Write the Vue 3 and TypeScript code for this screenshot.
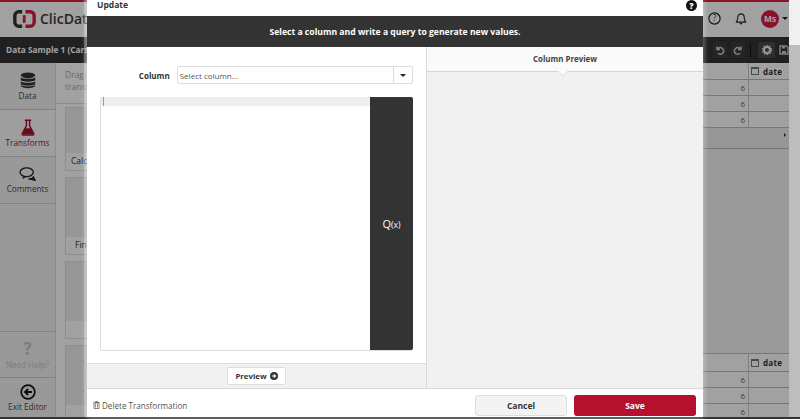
<script setup lang="ts">
const navTop = [
  { label: 'Data', icon: 'db', h: 47 },
  { label: 'Transforms', icon: 'flask', active: true, h: 47 },
  { label: 'Comments', icon: 'chat', h: 47 },
]
const cards = [
  { label: 'Calc', h: 64, pad: 5 },
  { label: 'Find', h: 78, pad: 9 },
  { label: '', h: 78, pad: 5 },
  { label: '', h: 78, pad: 5 },
]
</script>

<template>
  <div class="page">
    <div class="shell">
      <div class="app">
        <header class="top">
          <div class="brand">
            <svg class="logo" width="23" height="18" viewBox="0 0 24 19">
              <path d="M9.500 1.800H6A4.200 4.200 0 0 0 1.800 6v7A4.200 4.200 0 0 0 6 17.200h3.500" fill="none" stroke="#333" stroke-width="3.600" />
              <path d="M13 1.800h5A4.200 4.200 0 0 1 22.200 6v7a4.200 4.200 0 0 1-4.200 4.200h-5" fill="none" stroke="#d81f42" stroke-width="3.600" />
              <rect x="10.200" y="5.500" width="3" height="8" fill="#d81f42" />
            </svg>
            <span class="brand-name">ClicData</span>
          </div>
          <div class="top-right">
            <svg width="13" height="13" viewBox="0 0 18 18"><circle cx="9" cy="9" r="7.800" fill="none" stroke="#222" stroke-width="1.600" /><text x="9" y="13" text-anchor="middle" font-size="11.500" font-family="Open Sans" fill="#222">?</text></svg>
            <svg class="bell" width="12" height="14" viewBox="0 0 16 18"><path d="M8 2.200a4.200 4.200 0 0 0-4.200 4.200c0 4.400-1.800 5.800-2 6.800h12.400c-.2-1-2-2.400-2-6.800A4.200 4.200 0 0 0 8 2.200z M6.500 14.500a1.600 1.600 0 0 0 3 0" fill="none" stroke="#222" stroke-width="1.500" /></svg>
            <span class="avatar">Ms</span>
            <span class="avatar-caret"></span>
          </div>
        </header>
        <div class="crumb">
          <span class="crumb-title">Data Sample 1 (Cars)</span>
          <div class="tools">
            <span class="tool">
              <svg width="10" height="10" viewBox="0 0 10 10"><path d="M2 1.500v3h3M2.300 4.500A3.300 3.300 0 1 1 3 8.300" fill="none" stroke="#ccc" stroke-width="1.500" /></svg>
            </span>
            <span class="tool">
              <svg width="10" height="10" viewBox="0 0 10 10"><path d="M8 1.500v3H5M7.700 4.500A3.300 3.300 0 1 0 7 8.300" fill="none" stroke="#ccc" stroke-width="1.500" /></svg>
            </span>
            <span class="tool-sep"></span>
            <span class="tool tool-box">
              <svg width="10" height="10" viewBox="0 0 10 10"><circle cx="5" cy="5" r="3" fill="none" stroke="#eee" stroke-width="2" /><circle cx="5" cy="5" r="4.600" fill="none" stroke="#eee" stroke-width="1.200" stroke-dasharray="1.500 1.400" /></svg>
            </span>
            <span class="tool tool-save">
              <svg width="10" height="10" viewBox="0 0 10 10"><path d="M1 1h6.500L9 2.500V9H1z" fill="none" stroke="#ccc" stroke-width="1.400" /><rect x="3" y="1.500" width="3" height="2" fill="#ccc" /><rect x="3" y="6" width="4" height="2.500" fill="#ccc" /></svg>
            </span>
          </div>
        </div>
        <div class="work">
          <aside class="side">
            <div v-for="n in navTop" :key="n.label" class="nav" :class="{ active: n.active }" :style="{ height: n.h + 'px' }">
              <svg v-if="n.icon === 'db'" width="16" height="17" viewBox="0 0 20 21" fill="#333">
                <ellipse cx="10" cy="4" rx="9" ry="3.600" />
                <path d="M1 6.500c1.500 2.500 16.500 2.500 18 0v3.500c-1.500 2.800-16.500 2.800-18 0z" />
                <path d="M1 11.500c1.500 2.500 16.500 2.500 18 0V15c-1.500 2.800-16.500 2.800-18 0z" />
                <path d="M1 16.200c1.500 2.200 16.500 2.200 18 0v1c-1.500 3.800-16.500 3.800-18 0z" />
              </svg>
              <svg v-else-if="n.icon === 'flask'" width="16" height="17" viewBox="0 0 20 21">
                <path d="M6 1.500h8M8 2v6.500L2.800 18a1.200 1.200 0 0 0 1 1.800h12.400a1.200 1.200 0 0 0 1-1.800L12 8.500V2" fill="none" stroke="#a3142c" stroke-width="1.800" />
                <path d="M6.500 11.500h7l3.700 7.500H2.800z" fill="#a3142c" />
              </svg>
              <svg v-else width="18" height="15" viewBox="0 0 20 17">
                <ellipse cx="8.500" cy="6" rx="7.500" ry="5" fill="none" stroke="#222" stroke-width="1.500" />
                <path d="M4.500 10.500 3.500 13.500 7.500 11.500z" fill="#222" />
                <path d="M9.500 13c3 .4 5.500-.6 6.500-3 1.500 1.800 2.300 4.600 3.500 6-2.200-.1-3.900-.7-5-1.300-1.900.4-3.500-.2-5-1.700z" fill="#222" />
              </svg>
              <span>{{ n.label }}</span>
            </div>
            <div class="side-gap"></div>
            <div class="nav help">
              <span class="help-q">?</span>
              <span>Need Help?</span>
            </div>
            <div class="nav exit">
              <svg width="16" height="16" viewBox="0 0 16 16">
                <circle cx="8" cy="8" r="6.800" fill="none" stroke="#111" stroke-width="1.700" />
                <path d="M12 8H6M8.200 4.800 5 8l3.200 3.200" fill="none" stroke="#111" stroke-width="1.900" />
              </svg>
              <span>Exit Editor</span>
            </div>
          </aside>
          <section class="palette">
            <p class="hint">Drag a<br />transf</p>
            <div class="card-list">
              <div v-for="(c, i) in cards" :key="i" class="card" :style="{ height: c.h + 'px' }">
                <div class="card-img"></div>
                <div class="card-label" :style="{ paddingLeft: c.pad + 'px' }">{{ c.label }}</div>
              </div>
            </div>
          </section>
          <section class="grid-area">
            <div class="table">
              <div class="tr th"><span class="num"></span><span class="date-col"><i class="cal"></i><b>date</b></span></div>
              <div v-for="i in 3" :key="i" class="tr"><span class="num">6</span><span class="date-col"></span></div>
            </div>
            <div class="scrollbar"><span class="scroll-arrow"></span></div>
            <div class="grid-spacer"></div>
            <div class="table table-low">
              <div class="tr th-low"><span class="num"></span><span class="date-col"><i class="cal"></i><b>date</b></span></div>
              <div v-for="i in 3" :key="i" class="tr"><span class="num">6</span><span class="date-col"></span></div>
            </div>
          </section>
        </div>
      </div>
      <div class="vscroll"></div>
    </div>
    <div class="bottom-line"></div>

    <div class="backdrop"></div>

    <div class="modal">
      <div class="m-head">
        <span class="m-title">Update</span>
        <span class="m-help">?</span>
      </div>
      <div class="m-band">Select a column and write a query to generate new values.</div>
      <div class="m-body">
        <div class="m-left">
          <div class="m-form">
            <div class="col-row">
              <label class="col-label">Column</label>
              <div class="select">
                <span class="select-text">Select column...</span>
                <span class="select-btn"><i></i></span>
              </div>
            </div>
            <div class="editor">
              <div class="code">
                <div class="code-line"><i class="cursor"></i></div>
              </div>
              <div class="qx">Q<small>(x)</small></div>
            </div>
          </div>
          <div class="preview-bar">
            <button class="preview-btn">Preview
              <svg width="8" height="8" viewBox="0 0 10 10"><circle cx="5" cy="5" r="5" fill="#333" /><path d="M2.300 5h4.200M4.800 2.900 6.900 5 4.800 7.100" fill="none" stroke="#fff" stroke-width="1.400" /></svg>
            </button>
          </div>
        </div>
        <div class="m-right">
          <div class="cp-head">Column Preview</div>
          <div class="cp-body"></div>
        </div>
      </div>
      <div class="m-foot">
        <span class="delete">
          <svg width="7" height="8" viewBox="0 0 7 8"><path d="M.500 1.500h6M2.500 1.500V.500h2v1M1 2h5v5.500H1z" fill="none" stroke="#666" stroke-width=".8" /><path d="M2.500 3v3.500M4.500 3v3.500" stroke="#666" stroke-width=".7" /></svg>
          Delete Transformation
        </span>
        <div class="foot-btns">
          <button class="btn cancel">Cancel</button>
          <button class="btn save">Save</button>
        </div>
      </div>
    </div>
  </div>
</template>

<style>
html, body { margin: 0; padding: 0; overflow: hidden; }
</style>

<style scoped>
* { box-sizing: border-box; }
.page {
  position: relative;
  width: 800px;
  height: 419px;
  overflow: hidden;
  display: flex;
  flex-direction: column;
  font-family: "Open Sans", sans-serif;
  color: #333;
}
.shell { flex: 1; display: flex; min-height: 0; }
.app { width: 789px; flex: none; display: flex; flex-direction: column; background: #fff; }
.vscroll { flex: 1; background: linear-gradient(#f0f0f0 0 45px, #bdbdbd 45px); }
.top {
  height: 37px;
  flex: none;
  border-top: 2px solid #d81f42;
  background: #fff;
  display: flex;
  justify-content: space-between;
  align-items: center;
  padding: 0 1px 2px 13px;
}
.brand { display: flex; align-items: center; gap: 4px; width: 74px; overflow: hidden; }
.brand-name { font-size: 14px; line-height: 20px; font-weight: 600; color: #3a3a3a; white-space: nowrap; }
.logo { flex: none; }
.top-right { display: flex; align-items: center; }
.bell { margin-left: 14px; }
.avatar {
  margin-left: 14px;
  width: 18px; height: 18px; border-radius: 50%;
  background: #d81f42; color: #fff;
  font-size: 8.500px; font-weight: 700;
  display: flex; align-items: center; justify-content: center;
}
.avatar-caret { margin-left: 3px; border: 3px solid transparent; border-top-color: #222; border-bottom: 0; }
.crumb {
  height: 26px; flex: none;
  background: #333;
  display: flex; justify-content: space-between; align-items: center;
  padding: 0 0 0 6px;
  color: #fff;
}
.crumb-title { font-size: 8.300px; line-height: 12px; font-weight: 700; color: #fff; width: 81px; overflow: hidden; white-space: nowrap; }
.tools { display: flex; align-items: center; gap: 4px; }
.tool { width: 14px; height: 16px; display: flex; align-items: center; justify-content: center; background: #3c3c3c; }
.tool-sep { width: 1px; height: 13px; background: #111; margin: 0 3px 0 1px; }
.tool-box { width: 17px; background: #484848; }
.tool-save { width: 10px; background: none; }
.work { flex: 1; display: flex; min-height: 0; }
.side { width: 56px; flex: none; display: flex; flex-direction: column; background: #f3f3f3; border-right: 1px solid #ddd; }
.nav {
  display: flex; flex-direction: column; align-items: center; justify-content: center;
  gap: 1px; font-size: 8.200px; line-height: 11px; color: #444;
  height: 47px; border-bottom: 1px solid #ccc; flex: none;
}
.nav.active { color: #a3142c; background: #fafafa; }
.side-gap { flex: 1; }
.help { border-top: 1px solid #ccc; color: #c4c4c4; height: 47px; }
.help-q { font-size: 17px; line-height: 18px; font-weight: 700; color: #c4c4c4; }
.exit { border: 0; height: 39px; color: #444; }
.palette { flex: 1 1 0; background: #fff; min-width: 0; overflow: hidden; }
.hint { margin: 0; height: 41px; padding: 6px 9px 0; font-size: 8.500px; line-height: 12px; color: #aaa; white-space: nowrap; border-bottom: 1px solid #ddd; }
.card-list { display: flex; flex-direction: column; gap: 6px; padding: 3px 9px 0; }
.card { border: 1px solid #e0e0e0; display: flex; flex-direction: column; flex: none; }
.card-img { flex: 1; background: #eee; }
.card-label { height: 17px; font-size: 8.500px; line-height: 16px; white-space: nowrap; }
.grid-area { width: 129px; flex: none; background: #fff; display: flex; flex-direction: column; }
.table { display: flex; flex-direction: column; flex: none; }
.tr { height: 16px; display: flex; border-bottom: 1px solid #bbb; font-size: 8px; flex: none; }
.th { height: 17px; }
.num { width: 89px; flex: none; text-align: right; padding-right: 3px; line-height: 16px; border-right: 1px solid #ccc; color: #666; }
.date-col { flex: 1; display: flex; align-items: center; gap: 4px; padding-left: 2px; }
.date-col b { font-size: 8px; letter-spacing: .3px; }
.cal { width: 8px; height: 8px; border: 1px solid #777; border-top-width: 2px; display: block; }
.scrollbar { height: 21px; display: flex; justify-content: flex-end; align-items: center; padding: 0 3px 6px 0; background: #eee; border-bottom: 1px solid #bbb; flex: none; }
.scroll-arrow { border: 2.500px solid transparent; border-left-color: #333; border-right: 0; }
.grid-spacer { flex: 1; background: #f4f4f4; border-bottom: 1px solid #bbb; }
.table-low { height: 63px; overflow: hidden; }
.th-low { height: 18px; }
.bottom-line { height: 2px; flex: none; background: #333; }

.backdrop { position: absolute; inset: 0 11px 2px 0; background: rgba(0, 0, 0, .37); }

.modal {
  position: absolute;
  left: 87px; top: 0;
  width: 616px; height: 417px;
  display: flex; flex-direction: column;
  background: #fff;
  box-shadow: 0 0 6px rgba(255, 255, 255, .55), -3px 0 0 rgba(255, 255, 255, .25);
}
.m-head { height: 16px; flex: none; display: flex; justify-content: space-between; align-items: flex-start; padding: 0 6px 0 10px; }
.m-title { font-size: 8.500px; line-height: 9px; font-weight: 700; color: #333; }
.m-help {
  width: 11px; height: 11px; border-radius: 50%;
  background: #111; color: #fff; font-size: 8.500px; font-weight: 800; line-height: 11px; text-align: center;
}
.m-band {
  height: 31px; flex: none;
  background: #333; color: #fff;
  font-size: 8.650px; font-weight: 700;
  display: flex; align-items: center; justify-content: center;
}
.m-body { flex: 1; display: flex; min-height: 0; }
.m-left { width: 340px; flex: none; display: flex; flex-direction: column; border-right: 1px solid #d8d8d8; }
.m-form { flex: 1; display: flex; flex-direction: column; padding: 19px 13px 12px; min-height: 0; }
.col-row { display: flex; align-items: center; height: 18px; margin-left: -13px; flex: none; }
.col-label { width: 83px; text-align: right; font-size: 8px; font-weight: 700; color: #333; }
.select {
  margin-left: 7px; width: 237px; height: 18px;
  border: 1px solid #ddd; border-radius: 2px;
  display: flex; align-items: center; justify-content: space-between;
}
.select-text { font-size: 8px; color: #555; padding-left: 2px; }
.select-btn { width: 19px; height: 16px; border-left: 1px solid #ddd; display: flex; align-items: center; justify-content: center; }
.select-btn i { border: 3px solid transparent; border-top: 3px solid #222; border-bottom: 0; }
.editor { flex: 1; display: flex; margin-top: 13px; border: 1px solid #ddd; border-top: 0; border-radius: 2px; min-height: 0; }
.code { flex: 1; background: #fff; }
.code-line { height: 9px; background: #eee; padding-left: 2px; }
.cursor { display: block; width: 1px; height: 9px; background: #999; }
.qx {
  width: 43px; flex: none; background: #333; color: #fff; margin: 0 -1px 0 0;
  display: flex; align-items: center; justify-content: center;
  font-size: 11px; border-radius: 0 2px 2px 0;
}
.qx small { font-size: 8.500px; position: relative; top: 1px; }
.preview-bar { height: 25px; flex: none; background: #f1f1f1; border-top: 1px solid #ddd; display: flex; justify-content: center; align-items: center; padding-bottom: 1px; }
.preview-btn {
  font-family: inherit; width: 59px; height: 18px; padding: 0;
  background: #fff; border: 1px solid #ddd; border-radius: 2px;
  font-size: 7.800px; font-weight: 700; color: #333;
  display: flex; align-items: center; justify-content: center; gap: 3px;
}
.m-right { flex: 1; display: flex; flex-direction: column; min-width: 0; }
.cp-head {
  height: 25px; flex: none; position: relative;
  background: #fafafa; border-bottom: 1px solid #d5d5d5;
  font-size: 7.900px; font-weight: 700; color: #444;
  display: flex; align-items: center; justify-content: center;
}
.cp-head::after {
  content: ""; position: absolute; left: 132px; bottom: -4px;
  width: 7px; height: 7px; background: #fafafa; transform: rotate(45deg);
  border-right: 1px solid #e2e2e2; border-bottom: 1px solid #e2e2e2;
}
.cp-body { flex: 1; background: #f1f1f1; }
.m-foot { height: 29px; flex: none; border-top: 1px solid #d8d8d8; display: flex; justify-content: space-between; align-items: center; padding: 4px 7px 0 6px; }
.delete { font-size: 8.100px; color: #555; display: flex; align-items: center; gap: 2px; }
.foot-btns { display: flex; gap: 7px; }
.btn { font-family: inherit; height: 21px; border-radius: 3px; font-size: 8.500px; font-weight: 700; padding: 0; }
.cancel { width: 92px; background: #f3f3f3; border: 1px solid #ddd; color: #333; }
.save { width: 122px; background: #b5112f; border: 0; color: #fff; }
</style>
